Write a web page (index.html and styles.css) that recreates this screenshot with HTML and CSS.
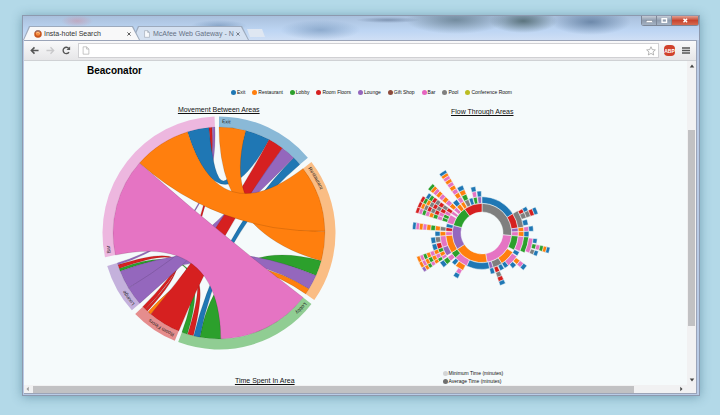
FILE: index.html
```html
<!DOCTYPE html>
<html lang="en">
<head>
  <meta charset="UTF-8">
  <title>Beaconator</title>
  <link rel="stylesheet" href="styles.css">
</head>
<body>
  <div class="window">
    <header class="title-bar">
      <nav class="tabs">
        <div class="tab active">
          <div class="tab-face">
            <svg class="favicon" viewBox="0 0 18 18"><circle cx="9" cy="9" r="8.5" fill="#c8541c"/><circle cx="9" cy="8" r="5" fill="#f58a3c"/><path d="M3 5a7 7 0 0 1 11-1" stroke="#8a7a84" stroke-width="2.5" fill="none"/><path d="M5 7l4-2 4 3" stroke="#ffd9b0" stroke-width="1.5" fill="none"/></svg>
            <a href="#">Insta-hotel Search</a>
            <button class="tab-close" aria-label="Close tab"><svg viewBox="0 0 10 10"><path d="M1 1l8 8M9 1l-8 8" stroke="#555" stroke-width="2.4"/></svg></button>
          </div>
        </div>
        <div class="tab">
          <div class="tab-face">
            <svg class="favicon" viewBox="0 0 18 18"><path d="M3.5 1.5h7l4 4v11h-11zM10.5 1.5v4h4" fill="#f7f9fc" stroke="#a5acb8" stroke-width="1.5"/></svg>
            <a href="#">McAfee Web Gateway - N</a>
            <button class="tab-close" aria-label="Close tab"><svg viewBox="0 0 10 10"><path d="M1 1l8 8M9 1l-8 8" stroke="#707784" stroke-width="2.4"/></svg></button>
          </div>
        </div>
        <button class="new-tab" aria-label="New tab"></button>
      </nav>
      <div class="window-buttons">
        <button aria-label="Minimize"><svg viewBox="0 0 14 10"><rect x="3.5" y="5" width="7" height="2.5" fill="#fff" stroke="#6b7686" stroke-width=".5"/></svg></button>
        <button aria-label="Maximize"><svg viewBox="0 0 14 10"><rect x="4.5" y="3" width="5" height="4" fill="none" stroke="#fff" stroke-width="1.5"/></svg></button>
        <button class="close" aria-label="Close"><svg viewBox="0 0 14 10"><path d="M5 3l4 4M9 3L5 7" stroke="#fff" stroke-width="1.6"/></svg></button>
      </div>
    </header>

    <div class="frame">
      <div class="toolbar">
        <button aria-label="Back"><svg viewBox="0 0 20 20"><path d="M19 10H4M10 3l-7 7 7 7" stroke="#555" stroke-width="3.4" fill="none"/></svg></button>
        <button aria-label="Forward"><svg viewBox="0 0 20 20"><path d="M1 10h15M10 3l7 7-7 7" stroke="#c9c9cb" stroke-width="3" fill="none"/></svg></button>
        <button aria-label="Reload"><svg viewBox="0 0 20 20"><path d="M15.500 13.500a7 7 0 1 1-.5-8" stroke="#555" stroke-width="3" fill="none"/><path d="M18 1v8h-8z" fill="#555"/></svg></button>
        <div class="address">
          <svg viewBox="0 0 18 22"><path d="M2 2h8.500l5.500 5.500V20H2zM10.500 2v5.500H16" fill="#fff" stroke="#a9a9a9" stroke-width="1.6"/></svg>
          <input type="text" aria-label="Address">
          <button class="star" aria-label="Bookmark"><svg viewBox="0 0 20 20"><path d="M10 1.500l2.500 5.700 6.200.6-4.700 4.100 1.400 6.100L10 14.800 4.600 18 6 11.900 1.300 7.800l6.200-.6z" fill="#fff" stroke="#999" stroke-width="1.4"/></svg></button>
        </div>
        <button class="adblock" aria-label="AdBlock Plus">ABP</button>
        <button class="menu" aria-label="Menu"><svg viewBox="0 0 16 16"><path d="M0 3h16M0 8h16M0 13h16" stroke="#555" stroke-width="3"/></svg></button>
      </div>

      <div class="viewport">
        <main class="page">
          <h1>Beaconator</h1>
          <ul class="legend">
            <li class="exit">Exit</li>
            <li class="restaurant">Restaurant</li>
            <li class="lobby">Lobby</li>
            <li class="floors">Room Floors</li>
            <li class="lounge">Lounge</li>
            <li class="gift">Gift Shop</li>
            <li class="bar">Bar</li>
            <li class="pool">Pool</li>
            <li class="conference">Conference Room</li>
          </ul>
          <div class="charts">
            <section>
              <h2>Movement Between Areas</h2>
              <svg id="chord" class="chord" viewBox="-117 -117 234 234"></svg>
            </section>
            <section class="flow">
              <h2>Flow Through Areas</h2>
              <svg id="sunburst" class="sunburst" viewBox="-75 -75 150 150"></svg>
            </section>
          </div>
          <div class="times">
            <h2>Time Spent In Area</h2>
            <ul>
              <li class="minimum">Minimum Time (minutes)</li>
              <li class="average">Average Time (minutes)</li>
            </ul>
          </div>
        </main>
        <div class="scroll-y">
          <svg viewBox="0 0 8 8"><path d="M4 2l3 4H1z"/></svg>
          <div class="track"><div class="thumb"></div></div>
          <svg viewBox="0 0 8 8"><path d="M4 6l3-4H1z"/></svg>
        </div>
      </div>
      <div class="scroll-x">
        <svg viewBox="0 0 8 8"><path d="M2 4l3-3v6z" fill="#999"/></svg>
        <div class="track"><div class="thumb"></div></div>
        <svg viewBox="0 0 8 8"><path d="M6 4L3 1v6z"/></svg>
      </div>
    </div>
  </div>

  <script src="charts.js"></script>
</body>
</html>
```

FILE: styles.css
```css
* {
  box-sizing: border-box;
  margin: 0;
  padding: 0;
}

body {
  background: #b3d9e8;
  min-height: 100vh;
  padding: 15px 20px 19px 22px;
  display: flex;
  font-family: "Liberation Sans", Arial, sans-serif;
  color: #111;
}

button {
  border: none;
  background: none;
  display: flex;
  align-items: center;
  justify-content: center;
}

svg {
  display: block;
}

ul {
  list-style: none;
}

.window {
  flex: 1;
  display: flex;
  flex-direction: column;
  border: 1px solid #8d99ae;
  background: #b9cbe6;
  box-shadow: 0 1px 10px rgba(40, 90, 115, 0.45);
}

/* title bar */

.title-bar {
  height: 24px;
  display: flex;
  justify-content: space-between;
  align-items: flex-end;
  background:
    radial-gradient(ellipse 28px 6px at 29% 10px, rgba(90, 125, 165, 0.5), transparent),
    radial-gradient(ellipse 40px 10px at 44% 14px, rgba(95, 130, 170, 0.5), transparent),
    radial-gradient(ellipse 32px 3px at 54% 4px, rgba(80, 100, 130, 0.5), transparent),
    radial-gradient(ellipse 50px 14px at 64% 4px, rgba(90, 115, 130, 0.7), transparent),
    radial-gradient(ellipse 34px 12px at 74% 5px, rgba(70, 95, 100, 0.8), transparent),
    radial-gradient(ellipse 40px 13px at 84% 6px, rgba(80, 110, 145, 0.7), transparent),
    radial-gradient(ellipse 16px 6px at 8% 5px, rgba(205, 140, 160, 0.5), transparent),
    linear-gradient(#a9c0dc, #bdd5f3 60%, #cfdff5);
}

.tabs {
  display: flex;
  align-items: flex-end;
}

.tab {
  width: 117px;
  height: 14px;
  margin-right: -8px;
  padding: 1px 1px 0;
  background: #9daabd;
  clip-path: polygon(0 100%, 6px 0, calc(100% - 7px) 0, 100% 100%);
}

.tab-face {
  height: 13px;
  padding: 0 8px 0 10px;
  display: flex;
  align-items: center;
  gap: 2px;
  background: #d5e1f1;
  clip-path: polygon(0 100%, 6px 0, calc(100% - 7px) 0, 100% 100%);
}

.tab.active {
  z-index: 1;
}

.tab.active .tab-face {
  background: #f8f8f9;
}

.favicon {
  width: 8px;
  height: 8px;
  flex: none;
}

.tab a {
  flex: 1;
  white-space: nowrap;
  font-size: 7px;
  line-height: 9px;
  color: #333;
  text-decoration: none;
}

.tab:not(.active) a {
  color: #667184;
}

.tab-close svg {
  width: 4px;
  height: 4px;
}

.new-tab {
  width: 18px;
  height: 8px;
  margin: 0 0 3px 6px;
  background: #dfe7f2;
  clip-path: polygon(0 0, calc(100% - 3px) 0, 100% 100%, 3px 100%);
}

.window-buttons {
  align-self: flex-start;
  display: flex;
  border: 1px solid #7d8797;
  border-top: none;
  border-radius: 0 0 3px 3px;
}

.window-buttons button {
  width: 15px;
  height: 9px;
  background: linear-gradient(#c3cbd6, #8f9cae 50%, #a4b2c3);
  border-right: 1px solid #7d8797;
}

.window-buttons svg {
  height: 9px;
}

.window-buttons .close {
  width: 26px;
  border-right: none;
  background: linear-gradient(#e0a093, #c8452f 50%, #d56a50);
}

/* browser frame */

.frame {
  flex: 1;
  display: flex;
  flex-direction: column;
  margin: 0 2px 1px 1px;
  border: 1px solid #9ba4b8;
  border-width: 1px 1px 1px 0;
  background: #f1f1f3;
}

.toolbar {
  height: 20px;
  display: flex;
  align-items: center;
  gap: 7px;
  padding: 0 6px 0 6px;
  background: linear-gradient(#f9f9fa, #e6e6e8);
  border-bottom: 1px solid #cfd1d4;
}

.toolbar > button svg {
  width: 9px;
  height: 9px;
}

.address {
  flex: 1;
  height: 15px;
  display: flex;
  align-items: center;
  padding: 0 2px 0 3px;
  background: #fff;
  border: 1px solid #d0d0d3;
}

.address > svg {
  width: 8px;
  height: 9px;
}

.address input {
  flex: 1;
  height: 12px;
  border: none;
  outline: none;
  background: none;
  font-size: 7px;
}

.star svg {
  width: 10px;
  height: 10px;
}

.toolbar .adblock {
  width: 11px;
  height: 11px;
  margin-left: -2px;
  background: #d0412b;
  color: #fff;
  border-radius: 4px;
  font: bold 5px "Liberation Sans", Arial, sans-serif;
}

.toolbar .menu svg {
  width: 8px;
}

.viewport {
  flex: 1;
  display: flex;
  background: #f5fafb;
}

.page {
  flex: 1;
  padding: 4px 73px 0 63px;
}

h1 {
  font-size: 10px;
  line-height: 12px;
  color: #000;
}

h2 {
  font-size: 7px;
  font-weight: normal;
  line-height: 9px;
  text-align: center;
  text-decoration: underline;
}

/* legend */

.legend {
  display: flex;
  justify-content: center;
  gap: 7px;
  margin: 11px 0 9px;
  padding-left: 42px;
}

li {
  display: flex;
  align-items: center;
  gap: 1px;
  font-size: 5px;
  line-height: 8px;
  white-space: nowrap;
}

li::before {
  content: "";
  width: 5px;
  height: 5px;
  border-radius: 50%;
  background: currentColor;
}

.exit::before { background: #1f77b4; }
.restaurant::before { background: #ff7f0e; }
.lobby::before { background: #2ca02c; }
.floors::before { background: #d62020; }
.lounge::before { background: #9467bd; }
.gift::before { background: #8c4b3c; }
.bar::before { background: #e665c0; }
.pool::before { background: #7f7f7f; }
.conference::before { background: #bcbd22; }
.minimum::before { background: #d3d5d6; }
.average::before { background: #6f6f6f; }

/* charts */

.charts {
  display: grid;
  grid-template-columns: 1fr 1fr;
}

.charts section {
  display: flex;
  flex-direction: column;
  align-items: center;
  gap: 2px;
}

.chord {
  width: 234px;
}

.charts .flow {
  padding-top: 2px;
  gap: 42px;
}

.sunburst {
  width: 150px;
}

.sunburst path {
  stroke: #f5fafb;
  stroke-width: 0.5;
}

.ribbon {
  stroke: #000;
  stroke-opacity: 0.4;
  stroke-width: 0.3;
}

.group {
  opacity: 0.5;
}

.chord text {
  font-size: 5px;
  fill: #222;
}

.times {
  display: grid;
  grid-template-columns: 1fr 1fr;
  align-items: end;
  margin-top: 19px;
}

.times > * {
  padding-left: 92px;
}

/* scrollbars */

.scroll-y {
  width: 9px;
  display: flex;
  flex-direction: column;
  align-items: center;
  padding: 1px 0;
  background: #f1f1f2;
}

.scroll-x {
  height: 8px;
  display: flex;
  align-items: center;
  padding: 0 12px 0 1px;
  background: #f1f1f2;
}

.scroll-y svg,
.scroll-x svg {
  width: 6px;
  height: 8px;
  fill: #444;
}

.track {
  flex: 1;
}

.scroll-y .track {
  display: flex;
  width: 7px;
  padding: 60px 0 50px;
}

.scroll-x .track {
  height: 7px;
  padding: 0 44px 0 2px;
}

.thumb {
  height: 100%;
  background: #c1c1c3;
}

.scroll-y .thumb {
  flex: 1;
  height: auto;
}
```

FILE: charts.js
```js
const colors = {
  exit: "#1f77b4",
  restaurant: "#ff7f0e",
  lobby: "#2ca02c",
  floors: "#d62020",
  lounge: "#9467bd",
  bar: "#e574c3",
  pool: "#7f7f7f"
};

const NS = "http://www.w3.org/2000/svg";

function add(parent, tag, attrs) {
  const el = document.createElementNS(NS, tag);
  for (const key in attrs) el.setAttribute(key, attrs[key]);
  parent.appendChild(el);
  return el;
}

// angle in degrees, clockwise from the top
function point(angle, r) {
  const a = angle * Math.PI / 180;
  return (Math.sin(a) * r).toFixed(2) + " " + (-Math.cos(a) * r).toFixed(2);
}

function arc(start, end, inner, outer) {
  const big = end - start > 180 ? 1 : 0;
  return `M${point(start, outer)}A${outer} ${outer} 0 ${big} 1 ${point(end, outer)}` +
    `L${point(end, inner)}A${inner} ${inner} 0 ${big} 0 ${point(start, inner)}Z`;
}

function ribbon(a0, a1, b0, b1, r) {
  return `M${point(a0, r)}A${r} ${r} 0 0 1 ${point(a1, r)}Q0 0 ${point(b0, r)}` +
    `A${r} ${r} 0 0 1 ${point(b1, r)}Q0 0 ${point(a0, r)}Z`;
}

// chord diagram
const chord = document.getElementById("chord");

const ribbons = [
  ["lobby", 197.4, 200.5, 248.8, 250.5],
  ["floors", 194, 197.2, 220.5, 221.5],
  ["floors", 250.5, 252.5, 222.5, 224],
  ["floors", 354.5, 356.3, 224, 226],
  ["lounge", 356.3, 357.8, 252.5, 253.6],
  ["lobby", 105.2, 113.7, 179, 190.4],
  ["lounge", 113.7, 121.9, 238.7, 248.8],
  ["restaurant", 121.9, 125.1, 220, 222],
  ["exit", 14.6, 28.2, 342.7, 354.5],
  ["exit", 44.8, 49.7, 190.4, 193.8],
  ["lounge", 36.7, 44.8, 228.4, 238.7],
  ["floors", 28.2, 36.7, 202.3, 220],
  ["restaurant", 0, 14.6, 89, 105.2],
  ["restaurant", 52.5, 89, 311.3, 342.7],
  ["bar", 127.5, 179, 258, 311.3]
];

const groups = [
  ["exit", "Exit", 0, 49.7],
  ["restaurant", "Restaurant", 52.5, 125.1],
  ["lobby", "Lobby", 127.5, 200.5],
  ["floors", "Room Floors", 202.3, 226],
  ["lounge", "Lounge", 228.4, 253.6],
  ["bar", "Bar", 258, 357.8]
];

ribbons.forEach(([name, a0, a1, b0, b1]) => {
  add(chord, "path", { d: ribbon(a0, a1, b0, b1, 106), fill: colors[name], class: "ribbon" });
});

groups.forEach(([name, label, start, end]) => {
  add(chord, "path", { d: arc(start, end, 106, 116.5), fill: colors[name], class: "group" });
  add(chord, "path", { id: "arc-" + name, d: `M${point(start, 110)}A110 110 0 0 1 ${point(end, 110)}`, fill: "none" });
  const text = add(chord, "text", {});
  const path = add(text, "textPath", { href: "#arc-" + name, startOffset: 3 });
  path.textContent = label;
});

// sunburst: start angle, end angle, first ring, one letter for each ring going outwards
const sunburst = document.getElementById("sunburst");

const letters = {
  e: "exit", r: "restaurant", l: "lobby", f: "floors", u: "lounge", b: "bar", p: "pool"
};

const spokes = [
  [0, 95, 1, "p"], [95, 170, 1, "b"], [170, 237, 1, "r"],
  [237, 285, 1, "u"], [285, 324, 1, "l"], [324, 360, 1, "f"],

  [0, 58, 2, "e"],
  [58, 82, 2, "fp"], [59, 64, 4, "fe"], [64, 71, 4, "ppfe"], [73, 80, 4, "e"],
  [82, 88, 2, "urbe"], [88, 95, 2, "bre"],

  [95, 118, 2, "l"], [95, 116, 3, "b"], [117, 123, 3, "e"], [95, 115, 4, "l"],
  [96, 113, 5, "b"], [96, 101, 6, "e"], [102, 107, 6, "lblre"], [108, 113, 6, "pe"],
  [122, 147, 2, "r"], [124, 141, 3, "b"], [126, 132, 4, "rbe"], [133, 139, 4, "e"],
  [141, 147, 3, "e"], [147, 162, 2, "p"], [148, 154, 3, "e"], [155, 161, 3, "fpfe"],
  [162, 168, 2, "ue"],

  [168, 205, 2, "e"],
  [205, 227, 2, "b"], [207, 219, 3, "r"], [208, 214, 4, "be"], [220, 226, 3, "e"],
  [227, 237, 2, "l"], [228, 235, 3, "ble"],

  [237, 266, 2, "r"], [237, 250, 3, "u"], [236, 240, 4, "blrblru"],
  [240, 245, 4, "rbrlrbr"], [245, 250, 4, "lrbrlbr"],
  [250, 266, 3, "b"], [250, 257, 4, "fe"], [258, 265, 4, "pe"],
  [266, 272, 2, "bre"], [273, 279, 2, "fprlrbrbe"], [279, 285, 2, "e"],

  [286, 300, 2, "b"], [287, 292, 3, "lblrblbf"], [292, 297, 3, "lbfpfprf"],
  [297, 302, 3, "bfpfprlf"], [302, 307, 2, "bfpfpfle"],
  [309, 315, 2, "brbrbrbrl"], [316, 323, 2, "re"],

  [324, 330, 2, "rbrbrbrbre"], [331, 338, 2, "plre"], [339, 345, 2, "e"],
  [346, 352, 2, "lbe"], [353, 359, 2, "ue"]
];

spokes.forEach(([start, end, ring, names]) => {
  [...names].forEach((letter, i) => {
    const inner = 21 * Math.sqrt(ring + i);
    const outer = 21 * Math.sqrt(ring + i + 1);
    add(sunburst, "path", { d: arc(start, end, inner, outer), fill: colors[letters[letter]] });
  });
});
```
